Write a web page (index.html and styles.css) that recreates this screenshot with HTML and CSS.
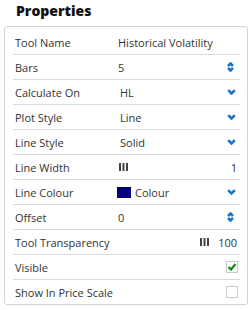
FILE: index.html
```html
<!DOCTYPE html>
<html lang="en">
<head>
    <meta charset="UTF-8">
    <meta name="viewport" content="width=device-width, initial-scale=1.0">
    <title>Properties</title>
    <link rel="stylesheet" href="styles.css">
</head>
<body>
    <h1 class="title">Properties</h1>

    <div class="panel">
        <div class="row">
            <span class="label">Tool Name</span>
            <span class="value">Historical Volatility</span>
        </div>
        <div class="row">
            <span class="label">Bars</span>
            <span class="value">5</span>
            <svg class="icon spin" width="7" height="10" viewBox="0 0 7 10"><path d="M1 4 L3.5 1.5 L6 4 M1 6 L3.5 8.5 L6 6"/></svg>
        </div>
        <div class="row">
            <span class="label">Calculate On</span>
            <span class="value select">HL</span>
            <svg class="icon chev" width="9" height="6" viewBox="0 0 9 6"><path d="M1.2 1.2 L4.5 4.5 L7.8 1.2"/></svg>
        </div>
        <div class="row">
            <span class="label">Plot Style</span>
            <span class="value select">Line</span>
            <svg class="icon chev" width="9" height="6" viewBox="0 0 9 6"><path d="M1.2 1.2 L4.5 4.5 L7.8 1.2"/></svg>
        </div>
        <div class="row">
            <span class="label">Line Style</span>
            <span class="value select">Solid</span>
            <svg class="icon chev" width="9" height="6" viewBox="0 0 9 6"><path d="M1.2 1.2 L4.5 4.5 L7.8 1.2"/></svg>
        </div>
        <div class="row">
            <span class="label">Line Width</span>
            <span class="value slider">
                <svg class="grip" width="9" height="8" viewBox="0 0 9 8"><rect x="0" y="0" width="2" height="8"/><rect x="3.5" y="0" width="2" height="8"/><rect x="7" y="0" width="2" height="8"/></svg>
            </span>
            <span class="num">1</span>
        </div>
        <div class="row">
            <span class="label">Line Colour</span>
            <span class="value colour"><span class="swatch"></span>Colour</span>
            <svg class="icon chev" width="9" height="6" viewBox="0 0 9 6"><path d="M1.2 1.2 L4.5 4.5 L7.8 1.2"/></svg>
        </div>
        <div class="row">
            <span class="label">Offset</span>
            <span class="value">0</span>
            <svg class="icon spin" width="7" height="10" viewBox="0 0 7 10"><path d="M1 4 L3.5 1.5 L6 4 M1 6 L3.5 8.5 L6 6"/></svg>
        </div>
        <div class="row">
            <span class="label">Tool Transparency</span>
            <span class="value right">
                <svg class="grip" width="9" height="8" viewBox="0 0 9 8"><rect x="0" y="0" width="2" height="8"/><rect x="3.5" y="0" width="2" height="8"/><rect x="7" y="0" width="2" height="8"/></svg>
            </span>
            <span class="num">100</span>
        </div>
        <div class="row">
            <span class="label">Visible</span>
            <span class="value"></span>
            <span class="check checked">
                <svg width="10" height="10" viewBox="0 0 10 10"><path d="M1.5 5 L4 7.5 L8.5 2"/></svg>
            </span>
        </div>
        <div class="row last">
            <span class="label">Show In Price Scale</span>
            <span class="value"></span>
            <span class="check"></span>
        </div>
    </div>
</body>
</html>
```

FILE: styles.css
```css
body {
    margin: 0;
    padding: 0 4px;
    font-family: "Open Sans", Arial, sans-serif;
    font-size: 11px;
    color: #333;
    background-color: white;
}
.title {
    margin: 0;
    padding: 1px 0 0 12px;
    height: 25px;
    font-size: 14px;
    font-weight: 800;
    color: #111;
    line-height: 20px;
}
.panel {
    border: 1px solid #d4d4d4;
    border-radius: 3px;
    padding: 3px 7px 0 8px;
    height: 274px;
}
.row {
    display: grid;
    grid-template-columns: 105px 1fr auto;
    align-items: center;
    height: 24px;
    border-bottom: 1px solid #d9d9d9;
}
.row.last {
    border-bottom: none;
}
.label {
    padding-left: 2px;
    white-space: nowrap;
}
.value {
    display: flex;
    align-items: center;
    white-space: nowrap;
}
.select {
    padding-left: 2px;
}
.right {
    justify-content: flex-end;
    padding-right: 9px;
}
.slider {
    padding-left: 1px;
}
.grip {
    fill: #444;
}
.num {
    padding-right: 3px;
}
.icon {
    fill: none;
    stroke: #1a75c4;
    stroke-width: 2.6;
}
.spin {
    margin-right: 6px;
}
.chev {
    margin-right: 4px;
}
.colour .swatch {
    width: 14px;
    height: 11px;
    background-color: #000080;
    margin-right: 4px;
    margin-left: -1px;
}
.check {
    width: 10px;
    height: 10px;
    border: 1px solid #c8c8c8;
    margin-right: 2px;
    display: flex;
    align-items: center;
    justify-content: center;
}
.check svg {
    fill: none;
    stroke: #128a12;
    stroke-width: 2.2;
}
```
